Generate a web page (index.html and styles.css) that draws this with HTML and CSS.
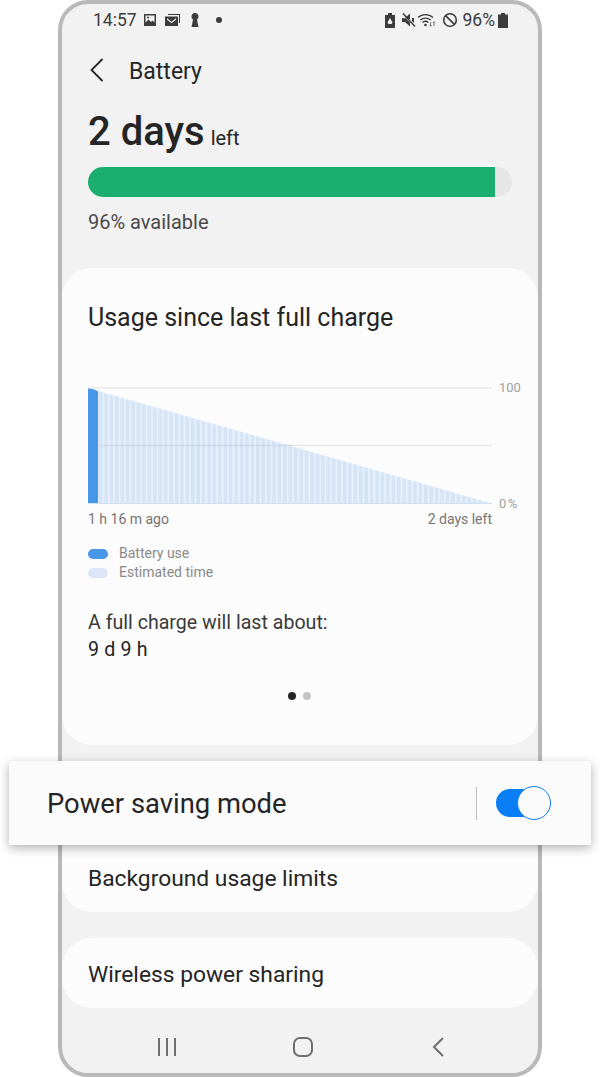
FILE: index.html
```html
<!DOCTYPE html>
<html lang="en">
<head>
    <meta charset="UTF-8">
    <meta name="viewport" content="width=device-width, initial-scale=1.0">
    <title>Battery</title>
    <link rel="stylesheet" href="styles.css">
</head>
<body>
    <div class="phone">
        <div class="status-bar">
            <div class="status-left">
                <span class="time">14:57</span>
                <svg class="ic" width="14" height="14" viewBox="0 0 14 14"><path fill="#3c3c3c" fill-rule="evenodd" d="M1 1h12v12H1zM2.500 2.500v7l3-3 2.500 2.500 1.500-1.500 2 2v-7zM5 3.500a1 1 0 1 1 0 2 1 1 0 0 1 0-2z"/></svg>
                <svg class="ic ic-mail" width="16" height="14" viewBox="0 0 16 14"><path fill="#3c3c3c" fill-rule="evenodd" d="M3 1h12v9h-1V2H3zM0 3.500h13V13H0zM2 5.200l4.500 3.500L11 5.200v1.600L6.500 10.300 2 6.800z"/></svg>
                <svg class="ic ic-key" width="10" height="16" viewBox="0 0 10 16"><path fill="#3c3c3c" d="M5 1a3.500 3.500 0 0 1 2 6.400L8.500 15h-7L3 7.400A3.500 3.500 0 0 1 5 1z"/></svg>
                <span class="dot"></span>
            </div>
            <div class="status-right">
                <svg width="10" height="15" viewBox="0 0 10 15"><path fill="#3c3c3c" fill-rule="evenodd" d="M3 0h4v2h3v13H0V2h3zM5 5L2.500 9.500 3.500 11h3l1-1.500z"/></svg>
                <svg class="ic-mute" width="16" height="16" viewBox="0 0 16 16"><path fill="#3c3c3c" d="M1 6h3l5-4.500V7zM1 6v4h3l5 4.500v-4L4.500 6zM11 9l2 2V6h-2z"/><path stroke="#3c3c3c" stroke-width="1.500" d="M2 1.500l12 13"/></svg>
                <svg class="ic-wifi" width="20" height="16" viewBox="0 0 20 16"><g fill="none" stroke="#3c3c3c" stroke-width="1.300"><path d="M1 5.500a11 11 0 0 1 15 0M3.300 8a8 8 0 0 1 10.400 0M5.600 10.500a4.500 4.500 0 0 1 5.800 0"/></g><circle cx="8.500" cy="13" r="1.300" fill="#3c3c3c"/><path fill="#8a8a8a" d="M13 10h1.200v3h1l-1.600 2-1.600-2h1zM17 9l1.600 2h-1v3h-1.200v-3h-1z"/></svg>
                <svg width="16" height="16" viewBox="0 0 16 16"><circle cx="8" cy="8" r="6.300" fill="none" stroke="#3c3c3c" stroke-width="1.600"/><path stroke="#3c3c3c" stroke-width="1.600" d="M3.600 3.600l8.800 8.800"/></svg>
                <span class="pct">96%</span>
                <svg width="10" height="15" viewBox="0 0 10 15"><path fill="#3c3c3c" d="M3 0h4v1.500h3V15H0V1.500h3z"/></svg>
            </div>
        </div>

        <div class="title-row">
            <svg class="back" width="16" height="26" viewBox="0 0 16 26"><path fill="none" stroke="#252525" stroke-width="1.800" d="M13.500 2L2.500 13l11 11"/></svg>
            <span class="title">Battery</span>
        </div>

        <div class="summary">
            <div class="days"><span class="days-num">2 days</span> <span class="days-left">left</span></div>
            <div class="bar"><div class="bar-fill" style="width: 96%"></div></div>
            <div class="available">96% available</div>
        </div>

        <section class="card card-usage">
            <h2 class="card-title">Usage since last full charge</h2>
            <div class="chart">
                <svg width="440" height="132" viewBox="0 0 440 132">
                    <defs>
                        <pattern id="stripes" x="0" y="0" width="5.420" height="10" patternUnits="userSpaceOnUse">
                            <rect width="4" height="10" fill="#d5e5f7"/>
                            <rect x="4" width="1.420" height="10" fill="#e6f0fa"/>
                        </pattern>
                    </defs>
                    <line x1="0" x2="404" y1="5" y2="5" stroke="#e8e8e8" stroke-width="1.500"/>
                    <line x1="0" x2="404" y1="62.500" y2="62.500" stroke="#e8e8e8" stroke-width="1.500"/>
                    <polygon points="10,8 404,120.500 10,120.500" fill="url(#stripes)"/>
                    <line x1="10" x2="205" y1="62.500" y2="62.500" stroke="#000" stroke-opacity="0.060" stroke-width="1.500"/>
                    <path d="M0 5.500q6 0 10 3V120.500H0z" fill="#4896e6"/>
                    <line x1="0" x2="404" y1="120.500" y2="120.500" stroke="#cfe0f3" stroke-width="1"/>
                    <text x="411" y="9" class="axis">100</text>
                    <text x="411" y="125" class="axis axis-zero">0%</text>
                </svg>
            </div>
            <div class="chart-labels"><span>1 h 16 m ago</span><span>2 days left</span></div>
            <ul class="legend">
                <li><span class="swatch swatch-use"></span>Battery use</li>
                <li><span class="swatch swatch-est"></span>Estimated time</li>
            </ul>
            <div class="last-label">A full charge will last about:</div>
            <div class="last-value">9 d 9 h</div>
            <div class="pager"><span class="pager-dot on"></span><span class="pager-dot"></span></div>
        </section>

        <section class="card card-limits">
            <div class="row-text">Background usage limits</div>
        </section>

        <section class="card card-wireless">
            <div class="row-text">Wireless power sharing</div>
        </section>

        <div class="nav-bar">
            <svg width="20" height="18" viewBox="0 0 20 18"><path stroke="#6f6f6f" stroke-width="2" d="M2 0v18M10 0v18M18 0v18"/></svg>
            <svg class="nav-home" width="20" height="20" viewBox="0 0 20 20"><rect x="1" y="1" width="18" height="18" rx="6" fill="none" stroke="#6f6f6f" stroke-width="2"/></svg>
            <svg width="12" height="20" viewBox="0 0 12 20"><path fill="none" stroke="#6f6f6f" stroke-width="2" d="M11 1L2 10l9 9"/></svg>
        </div>

        <div class="popup">
            <span class="popup-text">Power saving mode</span>
            <div class="popup-control">
                <span class="divider"></span>
                <span class="toggle"><span class="knob"></span></span>
            </div>
        </div>
    </div>
</body>
</html>
```

FILE: styles.css
```css
html, body {
    margin: 0;
    padding: 0;
    background: #fff;
}
body {
    font-family: Roboto, "Liberation Sans", sans-serif;
    color: #252525;
    width: 600px;
    height: 1077px;
    overflow: hidden;
}
.phone {
    position: relative;
    box-sizing: border-box;
    width: 484px;
    height: 1077px;
    margin-left: 58px;
    border: 4px solid #b9b9b9;
    border-radius: 30px;
    background: #f2f2f2;
}
.status-bar {
    display: flex;
    justify-content: space-between;
    align-items: center;
    height: 32px;
    padding: 0 30px 0 31px;
    color: #3c3c3c;
    font-size: 17.5px;
}
.status-left, .status-right {
    display: flex;
    align-items: center;
}
.status-left {
    gap: 8px;
}
.status-right {
    gap: 5px;
}
.time {
    margin-right: -2px;
}
.dot {
    width: 6px;
    height: 6px;
    margin-left: 8px;
    border-radius: 50%;
    background: #3c3c3c;
}
.pct {
    margin-right: -2px;
}
.ic-mail {
    margin-right: 1px;
}
.ic-mute {
    margin-left: 1px;
    margin-right: -5px;
}
.title-row {
    display: flex;
    align-items: center;
    height: 32px;
    margin-top: 18px;
    padding-left: 27px;
}
.back {
    margin-right: 24px;
}
.title {
    padding-top: 2px;
    font-size: 23px;
}
.summary {
    padding: 0 26px;
}
.days {
    margin-top: 20px;
    height: 52px;
    line-height: 52px;
    white-space: nowrap;
}
.days-num {
    font-size: 40px;
    font-weight: 500;
}
.days-left {
    margin-left: 2px;
    font-size: 20px;
}
.bar {
    margin-top: 9px;
    width: 424px;
    height: 30px;
    border-radius: 15px;
    background: #e6e6e6;
    overflow: hidden;
}
.bar-fill {
    height: 100%;
    background: #1aaf6f;
}
.available {
    margin-top: 13px;
    font-size: 20px;
    line-height: 24px;
    color: #4a4a4a;
}
.card {
    background: #fcfcfc;
    border-radius: 30px;
}
.card-usage {
    box-sizing: border-box;
    height: 477px;
    margin-top: 34px;
    padding: 33px 26px 0;
}
.card-title {
    margin: 0;
    font-size: 25px;
    font-weight: 400;
    line-height: 34px;
}
.chart {
    margin-top: 48px;
    height: 124px;
}
.chart svg {
    display: block;
    overflow: visible;
}
.axis {
    font-size: 13px;
    fill: #a0a0a0;
}
.axis-zero {
    letter-spacing: 1.5px;
}
.chart-labels {
    display: flex;
    justify-content: space-between;
    width: 404px;
    margin-top: 3px;
    font-size: 14px;
    line-height: 18px;
    color: #757575;
}
.legend {
    list-style: none;
    margin: 16px 0 0;
    padding: 0;
    font-size: 14px;
    line-height: 19px;
    color: #8a8a8a;
}
.legend li {
    display: flex;
    align-items: center;
}
.swatch {
    width: 20px;
    height: 10px;
    margin-right: 11px;
    border-radius: 5px;
}
.swatch-use {
    background: #4896e6;
}
.swatch-est {
    background: #dde6f8;
}
.last-label {
    margin-top: 27px;
    font-size: 19.6px;
    line-height: 27px;
    color: #3a3a3a;
}
.last-value {
    font-size: 19.6px;
    line-height: 27px;
    letter-spacing: 0.2px;
}
.pager {
    display: flex;
    justify-content: center;
    gap: 7px;
    margin-top: 29px;
    padding-right: 2px;
}
.pager-dot {
    width: 8px;
    height: 8px;
    border-radius: 50%;
    background: #c4c4c4;
}
.pager-dot.on {
    background: #252525;
}
.card-limits {
    display: flex;
    align-items: flex-end;
    height: 150px;
    margin-top: 17px;
}
.card-wireless {
    display: flex;
    align-items: center;
    height: 70px;
    margin-top: 26px;
}
.row-text {
    padding-left: 26px;
    font-size: 22.8px;
    line-height: 34px;
}
.card-limits .row-text {
    padding-bottom: 16px;
}
.card-wireless .row-text {
    padding-top: 4px;
}
.nav-bar {
    box-sizing: border-box;
    display: flex;
    justify-content: space-between;
    align-items: center;
    height: 65px;
    padding: 13px 94px 0 95px;
}
.nav-home {
    margin-left: -3px;
}
.popup {
    position: absolute;
    left: -53px;
    top: 757px;
    box-sizing: border-box;
    width: 582px;
    height: 84px;
    padding: 0 47px 0 38px;
    display: flex;
    justify-content: space-between;
    align-items: center;
    background: #fbfbfb;
    box-shadow: 0 3px 10px rgba(0, 0, 0, 0.3);
}
.popup-text {
    padding-top: 2px;
    font-size: 27.4px;
}
.popup-control {
    display: flex;
    align-items: center;
    gap: 19px;
}
.divider {
    width: 1px;
    height: 33px;
    background: #bdbdbd;
}
.toggle {
    position: relative;
    display: block;
    width: 48px;
    height: 28px;
    border-radius: 14px;
    background: #0a7ff5;
}
.knob {
    position: absolute;
    right: -7px;
    top: -3px;
    box-sizing: border-box;
    width: 34px;
    height: 34px;
    border: 1.5px solid #0a7ff5;
    border-radius: 50%;
    background: #fbfbfb;
}
```
